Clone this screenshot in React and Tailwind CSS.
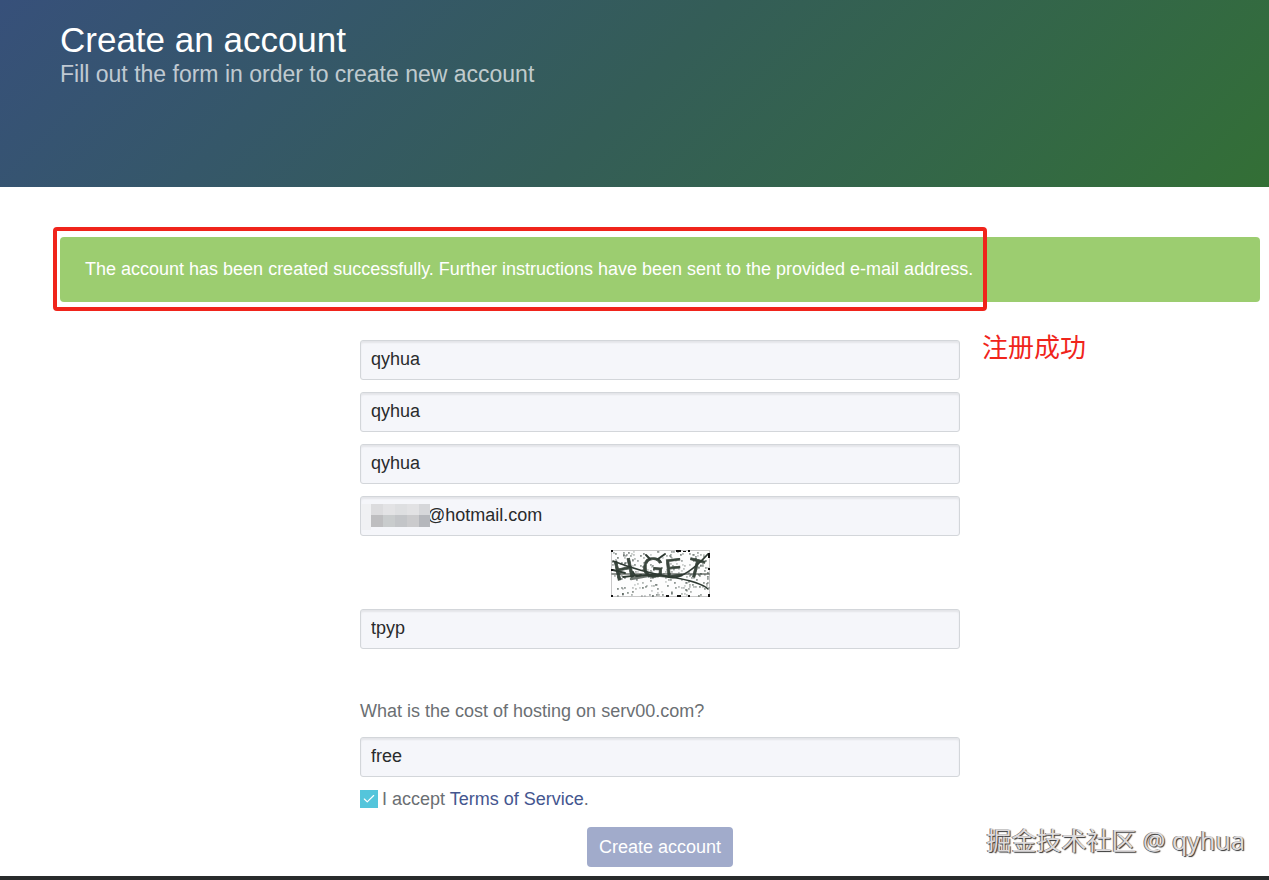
import { useState } from "react";
import { Check } from "lucide-react";

const fieldClass =
  "block h-10 w-full rounded-[3px] border border-[#d3d6da] bg-[#f5f6fa] px-[10px] pb-[2px] text-lg text-[#292b2c] shadow-[inset_0_2px_2px_rgba(0,0,0,0.07)] outline-none";

const Field = ({ label, className = fieldClass, ...props }) => (
  <input aria-label={label} className={className} {...props} />
);

// [x, width, upper shade, lower shade]
const mosaic = [
  [10, 12, "#dcdcde", "#bebec0"],
  [22, 12, "#e3e3e5", "#c9cccd"],
  [34, 12, "#dedfe1", "#c3c5c8"],
  [46, 12, "#e2e2e4", "#cbcbcd"],
  [58, 11, "#d6d7da", "#b5b7bc"],
];

const Mosaic = () => (
  <svg
    className="pointer-events-none absolute top-[5px] left-px"
    width="72"
    height="30"
    aria-hidden="true"
  >
    <rect x="0" y="3" width="10" height="26" fill="#f0f1f3" />
    {mosaic.map(([x, w, top, bottom]) => (
      <g key={x}>
        <rect x={x} y="3" width={w} height="11" fill={top} />
        <rect x={x} y="14" width={w} height="12" fill={bottom} />
      </g>
    ))}
  </svg>
);

// fixed seed so the noise stays the same between renders
const specks = (() => {
  let seed = 17;
  const next = () => {
    seed = (seed * 16807) % 2147483647;
    return seed / 2147483647;
  };
  return Array.from({ length: 230 }, () => ({
    x: Math.floor(next() * 97) + 1,
    y: Math.floor(next() * 45) + 1,
    o: 0.2 + next() * 0.4,
  }));
})();

const Captcha = () => (
  <svg
    width="99"
    height="47"
    viewBox="0 0 99 47"
    role="img"
    aria-label="Captcha"
    className="mx-auto mt-[2px] block"
  >
    <defs>
      <filter id="soft">
        <feGaussianBlur stdDeviation="0.5" />
      </filter>
    </defs>
    <rect x="0.5" y="0.5" width="98" height="46" fill="#fdfdfd" stroke="#c8c8c8" />
    <g filter="url(#soft)">
      {specks.map((s, i) => (
        <rect key={i} x={s.x} y={s.y} width="1.8" height="1.8" fill="#33403a" opacity={s.o} />
      ))}
      <g
        fill="#3a463d"
        stroke="#3a463d"
        strokeWidth="0.7"
        fontSize="28"
        fontFamily="Liberation Sans, sans-serif"
      >
        <text x="3" y="29" transform="rotate(-12 12 20)">H</text>
        <text x="31" y="27" transform="rotate(4 40 18)">G</text>
        <text x="54" y="27" fontSize="26" transform="rotate(-6 62 18)">E</text>
        <text x="77" y="27" fontSize="26" transform="rotate(14 84 18)">T</text>
      </g>
      <g fill="none" stroke="#2f3a33" strokeLinecap="round">
        <path d="M1 24h97" strokeWidth="1.6" opacity="0.7" />
        <path d="M2 11Q30 22 60 27T97 39" strokeWidth="1.6" />
        <path d="M12 27Q44 23 58 27T97 4" strokeWidth="1.8" />
        <path d="M22 22q2 6 8 3M35 5l4 4M54 4l-7 5M2 20l12 3" strokeWidth="2" />
        <path d="M20 29l22-4 18 2" strokeWidth="2.4" opacity="0.7" />
      </g>
    </g>
    <path
      d="M0 0h2v2H0zM65 0h5v2h-5zM72 1h3v1h-3zM77 0h2v2h-2zM97 3h2v5h-2zM97 18h2v2h-2zM0 45h2v2H0zM55 45h3v2h-3zM66 45h4v2h-4zM77 45h2v2h-2zM97 44h2v3h-2zM0 19h2v2H0z"
      fill="#111"
    />
  </svg>
);

const App = () => {
  const [accepted, setAccepted] = useState(true);

  return (
    <div className="relative flex min-h-screen flex-col bg-white font-['Liberation_Sans',Arial,sans-serif] text-lg text-[#6b6f73]">
      <header className="h-[187px] bg-linear-135 from-[#37507a] via-[#345d57] to-[#336f35] pt-5 pr-[9px] pl-[60px]">
        <h1 className="text-[35px] leading-10 text-white">Create an account</h1>
        <p className="text-[23px] leading-7 text-white/70">
          Fill out the form in order to create new account
        </p>
      </header>

      <main className="grow pr-[9px] pb-[9px] pl-[60px]">
        <div className="relative mt-[50px]">
          <div
            role="status"
            className="rounded-[4px] bg-[#9ccd70] px-[25px] py-[19px] leading-[27px] text-white"
          >
            The account has been created successfully. Further instructions have been sent to the
            provided e-mail address.
          </div>
          <div className="pointer-events-none absolute -top-[10px] -left-[7px] h-[84px] w-[934px] rounded-[4px] border-4 border-[#f0241b]" />
          <span className="absolute top-[91px] left-[922px] font-['Noto_Sans_CJK_SC',sans-serif] text-[26px] leading-9 text-[#f0241b]">
            注册成功
          </span>
        </div>

        <form
          className="mx-auto mt-[38px] max-w-[600px]"
          onSubmit={(e) => e.preventDefault()}
        >
          <div className="flex flex-col gap-3">
            <Field label="First name" defaultValue="qyhua" />
            <Field label="Last name" defaultValue="qyhua" />
            <Field label="Username" defaultValue="qyhua" />
            <div className="relative">
              <Field
                label="E-mail"
                defaultValue="@hotmail.com"
                className={fieldClass.replace("px-[10px]", "pl-[66px]")}
              />
              <Mosaic />
            </div>
            <Captcha />
            <Field label="Captcha text" defaultValue="tpyp" />
          </div>

          <label htmlFor="cost" className="mt-12 block leading-7">
            What is the cost of hosting on serv00.com?
          </label>
          <input id="cost" defaultValue="free" className={`mt-3 ${fieldClass}`} />

          <div className="mt-2 flex items-center gap-1 leading-7">
            <span className="relative size-[18px]">
              <input
                id="terms"
                type="checkbox"
                checked={accepted}
                onChange={(e) => setAccepted(e.target.checked)}
                className="block size-[18px] appearance-none bg-[#54c5db]"
              />
              {accepted && (
                <Check
                  size={14}
                  strokeWidth={2}
                  className="pointer-events-none absolute inset-[2px] text-white"
                />
              )}
            </span>
            <label htmlFor="terms">
              I accept{" "}
              <a href="#terms" className="text-[#44568f]">
                Terms of Service
              </a>
              .
            </label>
          </div>

          <button
            type="submit"
            className="mx-auto mt-[14px] block h-10 rounded-[4px] bg-[#a1abcb] px-3 text-white"
          >
            Create account
          </button>
        </form>
      </main>

      <footer className="h-1 bg-[#292b2c]" />

      <div className="pointer-events-none absolute right-6 bottom-6 font-['Noto_Sans','Noto_Sans_CJK_SC',sans-serif] text-[25px] leading-8 text-[#dedbdc] [text-shadow:1px_1px_1px_#333,-1px_0_0_#777]">
        掘金技术社区 @ qyhua
      </div>
    </div>
  );
};

export default App;
